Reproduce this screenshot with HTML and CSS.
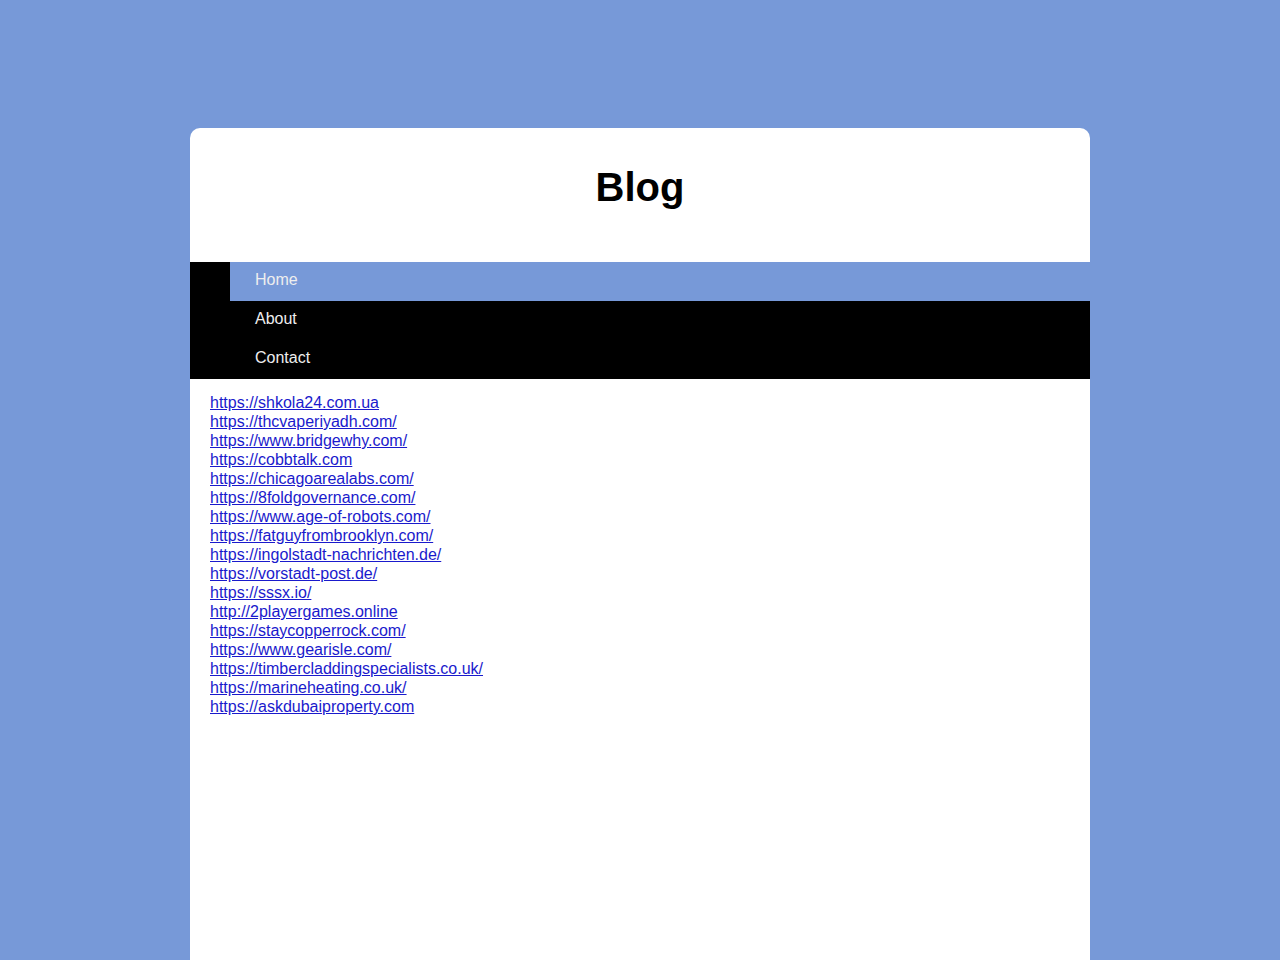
FILE: index.html
```html
<!DOCTYPE html>
<html lang="en">
<head>
<meta charset="utf-8">
<title>Blog</title>
<link rel="stylesheet" href="styles.css">
</head>
<body>
<div class="page">
  <header class="header">
    <h1 class="title">Blog</h1>
  </header>
  <nav class="nav">
    <ul class="menu">
      <li class="menu-item active"><a href="#">Home</a></li>
      <li class="menu-item"><a href="#">About</a></li>
      <li class="menu-item"><a href="#">Contact</a></li>
    </ul>
  </nav>
  <main class="content">
    <a class="link" href="#">https://shkola24.com.ua</a>
    <a class="link" href="#">https://thcvaperiyadh.com/</a>
    <a class="link" href="#">https://www.bridgewhy.com/</a>
    <a class="link" href="#">https://cobbtalk.com</a>
    <a class="link" href="#">https://chicagoarealabs.com/</a>
    <a class="link" href="#">https://8foldgovernance.com/</a>
    <a class="link" href="#">https://www.age-of-robots.com/</a>
    <a class="link" href="#">https://fatguyfrombrooklyn.com/</a>
    <a class="link" href="#">https://ingolstadt-nachrichten.de/</a>
    <a class="link" href="#">https://vorstadt-post.de/</a>
    <a class="link" href="#">https://sssx.io/</a>
    <a class="link" href="#">http://2playergames.online</a>
    <a class="link" href="#">https://staycopperrock.com/</a>
    <a class="link" href="#">https://www.gearisle.com/</a>
    <a class="link" href="#">https://timbercladdingspecialists.co.uk/</a>
    <a class="link" href="#">https://marineheating.co.uk/</a>
    <a class="link" href="#">https://askdubaiproperty.com</a>
  </main>
</div>
</body>
</html>
```

FILE: styles.css
```css
html, body {
  margin: 0;
  padding: 0;
}
body {
  background: #7799d8;
  font-family: "Liberation Sans", Arial, sans-serif;
  font-size: 16px;
}
.page {
  width: 900px;
  margin: 128px auto 0;
  background: #fff;
  border-radius: 10px 10px 0 0;
  min-height: 832px;
}
.header {
  height: 134px;
  display: flex;
  align-items: center;
  justify-content: center;
}
.title {
  margin: 0;
  font-size: 40px;
  font-weight: bold;
  color: #000;
  line-height: 1;
  position: relative;
  top: -8px;
}
.nav {
  background: #000;
  padding-left: 40px;
}
.menu {
  list-style: none;
  margin: 0;
  padding: 0;
}
.menu-item a {
  display: block;
  height: 39px;
  line-height: 35px;
  padding-left: 25px;
  color: #eee;
  text-decoration: none;
}
.menu-item.active a {
  background: #7799d8;
}
.content {
  padding: 14px 20px 20px;
  display: flex;
  flex-direction: column;
  align-items: flex-start;
}
.link {
  color: #1a1acc;
  line-height: 19px;
}
```
